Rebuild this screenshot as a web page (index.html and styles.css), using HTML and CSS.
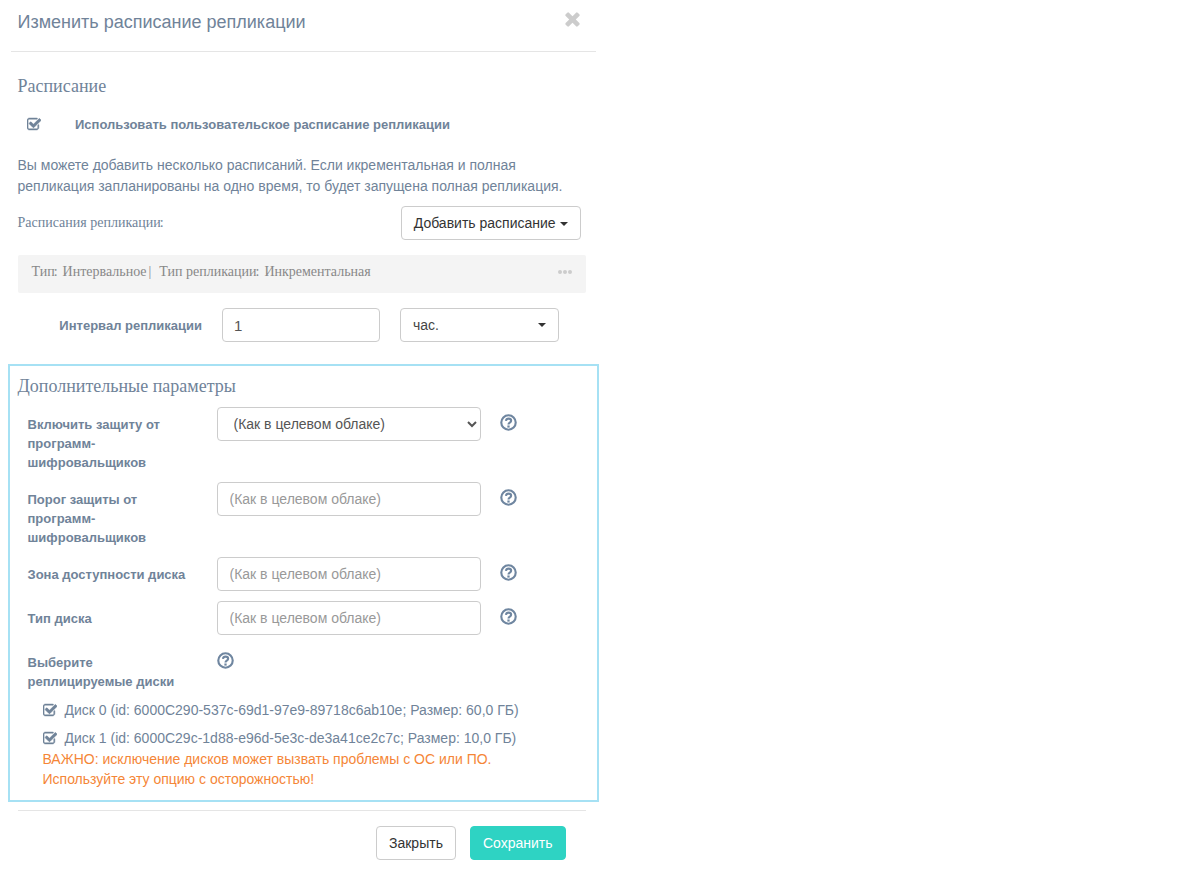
FILE: index.html
```html
<!DOCTYPE html>
<html lang="ru">
<head>
  <meta charset="UTF-8">
  <title>Изменить расписание репликации</title>
  <link rel="stylesheet" href="styles.css">
</head>
<body>
  <svg class="icon-defs" aria-hidden="true">
    <symbol id="i-check" viewBox="0 0 1664 1664">
      <path stroke="currentColor" stroke-width="60" d="M1408 930v318q0 119-84.5 203.5T1120 1536H288q-119 0-203.5-84.5T0 1248V416q0-119 84.5-203.5T288 128h832q63 0 117 25 15 7 18 23 3 17-9 29l-49 49q-10 10-23 10-3 0-9-2-23-6-45-6H288q-66 0-113 47t-47 113v832q0 66 47 113t113 47h832q66 0 113-47t47-113V994q0-13 9-22l64-64q10-10 23-10 6 0 12 3 20 8 20 29zm231-489l-814 814q-24 24-57 24t-57-24L281 825q-24-24-24-57t24-57l110-110q24-24 57-24t57 24l263 263 647-647q24-24 57-24t57 24l110 110q24 24 24 57t-24 57z"/>
    </symbol>
    <symbol id="i-help" viewBox="0 0 24 24">
      <circle cx="12" cy="12" r="10.2" fill="none" stroke="currentColor" stroke-width="3"/>
      <path d="M8.4 9.6c.3-2 1.8-3.1 3.7-3.1 2 0 3.6 1.2 3.6 3 0 2.8-3.7 2.6-3.7 5.2" fill="none" stroke="currentColor" stroke-width="3"/>
      <rect x="10.4" y="16.2" width="3.2" height="3"/>
    </symbol>
    <symbol id="i-close" viewBox="0 0 1408 1408">
      <path d="M1298 1066q0 40-28 68l-136 136q-28 28-68 28t-68-28L704 976l-294 294q-28 28-68 28t-68-28L138 1134q-28-28-28-68t28-68l294-294-294-294q-28-28-28-68t28-68l136-136q28-28 68-28t68 28l294 294 294-294q28-28 68-28t68 28l136 136q28 28 28 68t-28 68L976 704l294 294q28 28 28 68z"/>
    </symbol>
  </svg>

  <div class="modal">
    <div class="modal-header">
      <h4 class="modal-title">Изменить расписание репликации</h4>
      <svg class="close-icon"><use href="#i-close"/></svg>
    </div>

    <div class="modal-body">
      <h5 class="section-title">Расписание</h5>
      <div class="custom-check">
        <svg class="check-icon"><use href="#i-check"/></svg>
        <span>Использовать пользовательское расписание репликации</span>
      </div>
      <p class="hint">Вы можете добавить несколько расписаний. Если икрементальная и полная<br>репликация запланированы на одно время, то будет запущена полная репликация.</p>
      <div class="schedule-head">
        <span class="schedule-label">Расписания репликации<span class="colon">:</span></span>
        <button class="btn btn-add">Добавить расписание <i class="caret"></i></button>
      </div>
      <div class="schedule-bar">
        <div class="schedule-info">
          <span class="info-key">Тип<span class="colon">:</span></span>
          <span>Интервальное</span>
          <span class="info-sep">|</span>
          <span class="info-key">Тип репликации<span class="colon">:</span></span>
          <span>Инкрементальная</span>
        </div>
        <span class="dots"><i></i><i></i><i></i></span>
      </div>
      <div class="interval-row">
        <label class="interval-label">Интервал репликации</label>
        <input class="field interval-value" type="text" value="1">
        <div class="unit-select">час.<i class="caret"></i></div>
      </div>
    </div>

    <div class="advanced">
      <h5 class="section-title advanced-title">Дополнительные параметры</h5>

      <div class="form-row">
        <label class="form-label">Включить защиту от программ-шифровальщиков</label>
        <select class="field form-select">
          <option>(Как в целевом облаке)</option>
        </select>
        <svg class="help-icon"><use href="#i-help"/></svg>
      </div>
      <div class="form-row">
        <label class="form-label">Порог защиты от программ-шифровальщиков</label>
        <input class="field form-input" type="text" placeholder="(Как в целевом облаке)">
        <svg class="help-icon"><use href="#i-help"/></svg>
      </div>
      <div class="form-row row-short">
        <label class="form-label label-wide">Зона доступности диска</label>
        <input class="field form-input" type="text" placeholder="(Как в целевом облаке)">
        <svg class="help-icon"><use href="#i-help"/></svg>
      </div>
      <div class="form-row row-short">
        <label class="form-label">Тип диска</label>
        <input class="field form-input" type="text" placeholder="(Как в целевом облаке)">
        <svg class="help-icon"><use href="#i-help"/></svg>
      </div>
      <div class="disks-head">
        <label class="form-label">Выберите реплицируемые диски</label>
        <svg class="help-icon"><use href="#i-help"/></svg>
      </div>

      <div class="disk">
        <svg class="check-icon"><use href="#i-check"/></svg>
        <span>Диск 0 (id: 6000C290-537c-69d1-97e9-89718c6ab10e; Размер: 60,0 ГБ)</span>
      </div>
      <div class="disk">
        <svg class="check-icon"><use href="#i-check"/></svg>
        <span>Диск 1 (id: 6000C29c-1d88-e96d-5e3c-de3a41ce2c7c; Размер: 10,0 ГБ)</span>
      </div>
      <p class="warning">ВАЖНО: исключение дисков может вызвать проблемы с ОС или ПО.<br>Используйте эту опцию с осторожностью!</p>
    </div>

    <div class="modal-footer">
      <button class="btn">Закрыть</button>
      <button class="btn btn-save">Сохранить</button>
    </div>
  </div>
</body>
</html>
```

FILE: styles.css
```css
body {
  margin: 0;
  background-color: #fff;
  font-family: "Liberation Sans", Arial, sans-serif;
  font-size: 14px;
  color: #708399;
}
.icon-defs {
  display: none;
}
.modal {
  width: 600px;
  height: 889px;
  margin-left: -0.5px;
}
.modal-header {
  display: flex;
  justify-content: space-between;
  height: 51px;
  margin: 0 4px 0 11.5px;
  padding: 0 15px 0 6.5px;
  border-bottom: 1px solid #e5e5e5;
}
.modal-title {
  margin: 11px 0 0;
  font-size: 18px;
  font-weight: normal;
  line-height: 22px;
}
.close-icon {
  width: 17px;
  height: 17px;
  margin-top: 11px;
  fill: #cccccc;
}
.modal-body {
  margin: 0 14px 0 18px;
}
.section-title {
  margin: 0;
  font-family: "Liberation Serif", "Times New Roman", serif;
  font-size: 18px;
  font-weight: normal;
  line-height: 22px;
}
.modal-body .section-title {
  padding-top: 23px;
}
.custom-check {
  display: flex;
  align-items: center;
  height: 20px;
  margin: 17px 0 0 9.5px;
  font-size: 13px;
  font-weight: bold;
}
.custom-check span {
  margin-left: 34px;
}
.check-icon {
  flex: none;
  width: 14px;
  height: 14px;
  fill: currentColor;
  overflow: visible;
}
.hint {
  margin: 21px 0 0;
  line-height: 21px;
}
.schedule-head {
  display: flex;
  justify-content: space-between;
  align-items: center;
  margin: 9px 5px 0 0;
}
.schedule-label {
  font-family: "Liberation Serif", "Times New Roman", serif;
}
.colon {
  margin-left: -1px;
}
.btn {
  height: 34px;
  padding: 0 12px;
  border: 1px solid #ccc;
  border-radius: 4px;
  background-color: #fff;
  font-family: inherit;
  font-size: 14px;
  color: #333;
}
.caret {
  display: inline-block;
  width: 0;
  height: 0;
  vertical-align: middle;
  border-top: 4px solid #333;
  border-right: 4px solid transparent;
  border-left: 4px solid transparent;
}
.schedule-bar {
  display: flex;
  justify-content: space-between;
  height: 38px;
  margin-top: 15px;
  padding: 9px 0 0 14px;
  box-sizing: border-box;
  border-radius: 2px;
  background-color: #f4f4f4;
  font-family: "Liberation Serif", "Times New Roman", serif;
  color: #888;
}
.schedule-info {
  display: flex;
}
.info-key {
  margin-right: 5px;
}
.info-sep {
  margin: 0 8px 0 2px;
}
.dots {
  display: flex;
  gap: 1px;
  margin: 6px 14px 0 0;
}
.dots i {
  width: 4px;
  height: 4px;
  border-radius: 50%;
  background-color: #ccc;
}
.interval-row {
  display: flex;
  align-items: center;
  margin-top: 15px;
}
.interval-label {
  width: 184.5px;
  font-size: 13px;
  font-weight: bold;
  text-align: right;
}
.field {
  box-sizing: border-box;
  height: 34px;
  border: 1px solid #ccc;
  border-radius: 4px;
  background-color: #fff;
  font-family: inherit;
  font-size: 14px;
  color: #555;
  outline: none;
}
.field::placeholder {
  color: #999;
}
.interval-value {
  width: 158px;
  margin-left: 20px;
  padding: 0 11px;
  font-size: 15px;
}
.unit-select {
  display: flex;
  justify-content: space-between;
  align-items: center;
  box-sizing: border-box;
  width: 159px;
  height: 34px;
  margin-left: 20px;
  padding: 0 12px;
  border: 1px solid #ccc;
  border-radius: 4px;
  color: #444;
}
.advanced {
  box-sizing: border-box;
  width: 591px;
  height: 438px;
  margin: 22px 0 0 8px;
  padding: 9px 0 0 8px;
  border: 2px solid #a6e1f4;
}
.form-row {
  display: flex;
  align-items: flex-start;
  height: 75px;
}
.row-short {
  height: 44px;
}
.advanced-title {
  margin-bottom: 10px;
}
.form-label {
  flex: none;
  box-sizing: border-box;
  width: 199px;
  padding: 8px 10px 0 10px;
  font-size: 13px;
  font-weight: bold;
  line-height: 19px;
}
.label-wide {
  padding-right: 0;
}
.form-select {
  width: 264px;
  padding: 0 12px;
  color: #555;
}
.form-input {
  width: 264px;
  padding: 0 12px;
}
.help-icon {
  flex: none;
  width: 17px;
  height: 17px;
  margin: 7px 0 0 19px;
  color: #6f86a0;
  fill: currentColor;
}
.disks-head {
  display: flex;
}
.disks-head .form-label {
  padding-right: 20px;
}
.disks-head .help-icon {
  margin-left: 0;
}
.disk {
  display: flex;
  align-items: center;
  height: 20px;
  margin: 9px 0 0 25px;
}
.disk + .disk {
  margin-top: 8px;
}
.disk span {
  margin-left: 8px;
}
.warning {
  margin: 1px 0 0 25px;
  line-height: 20px;
  color: #f58637;
}
.modal-footer {
  display: flex;
  justify-content: flex-end;
  gap: 14px;
  margin: 8px 14px 0 18px;
  padding: 15px 20px 0 0;
  border-top: 1px solid #e5e5e5;
}
.btn-save {
  border-color: #2ed3c3;
  background-color: #2ed3c3;
  color: #fff;
}
```
